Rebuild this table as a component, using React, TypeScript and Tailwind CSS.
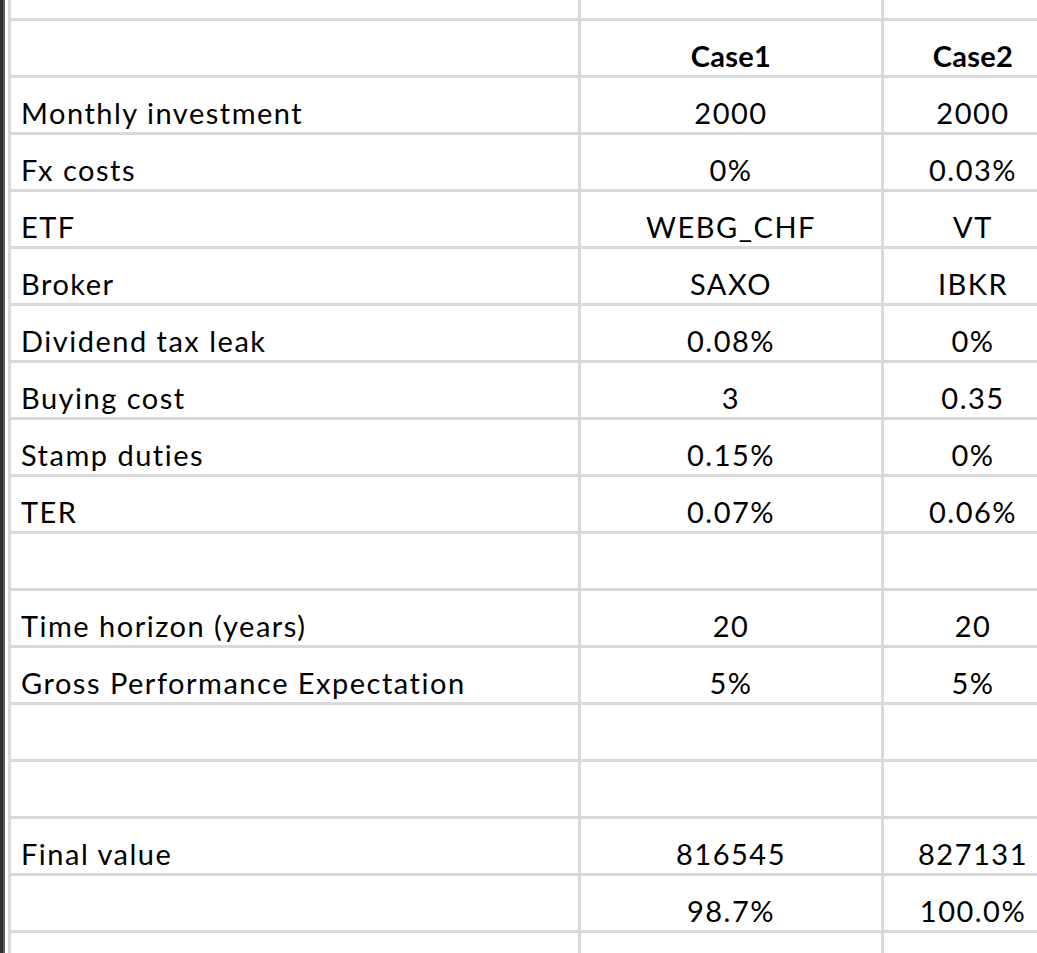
import React from "react";

type Row = { label: string; a: string; b: string; bold?: boolean };

const rows: Row[] = [
  { label: "", a: "Case1", b: "Case2", bold: true },
  { label: "Monthly investment", a: "2000", b: "2000" },
  { label: "Fx costs", a: "0%", b: "0.03%" },
  { label: "ETF", a: "WEBG_CHF", b: "VT" },
  { label: "Broker", a: "SAXO", b: "IBKR" },
  { label: "Dividend tax leak", a: "0.08%", b: "0%" },
  { label: "Buying cost", a: "3", b: "0.35" },
  { label: "Stamp duties", a: "0.15%", b: "0%" },
  { label: "TER", a: "0.07%", b: "0.06%" },
  { label: "", a: "", b: "" },
  { label: "Time horizon (years)", a: "20", b: "20" },
  { label: "Gross Performance Expectation", a: "5%", b: "5%" },
  { label: "", a: "", b: "" },
  { label: "", a: "", b: "" },
  { label: "Final value", a: "816545", b: "827131" },
  { label: "", a: "98.7%", b: "100.0%" },
];

export default function App() {
  return (
    <div
      className="flex w-[1037px] h-[953px] overflow-hidden bg-white text-black"
      style={{ fontFamily: "Lato, 'Open Sans', sans-serif" }}
    >
      <div className="w-[3px] shrink-0 bg-[#2f2f2f]" />
      <div className="w-[2px] shrink-0 bg-[#5e5e5e]" />
      <div className="w-[3px] shrink-0 bg-white" />
      <div className="grid shrink-0 grid-cols-[567px_300px_200px] grid-rows-[18px_repeat(16,54px)_40px] gap-[3px] border-l-[3px] border-[#d9d9d9] bg-[#d9d9d9] text-[29px] leading-none">
        <div className="bg-white" />
        <div className="bg-white" />
        <div className="bg-white" />
        {rows.map((r, i) => (
          <React.Fragment key={i}>
            <div className="flex items-end bg-white pl-[10px] pb-[5px] tracking-[1.5px]">
              {r.label}
            </div>
            <div
              className={`flex items-end justify-center bg-white pb-[5px] ${r.bold ? "font-bold tracking-[0.3px]" : "tracking-[1.5px]"}`}
            >
              {r.a}
            </div>
            <div
              className={`flex items-end justify-center bg-white pb-[5px] pr-[22px] ${r.bold ? "font-bold tracking-[0.3px]" : "tracking-[1.5px]"}`}
            >
              {r.b}
            </div>
          </React.Fragment>
        ))}
        <div className="bg-white" />
        <div className="bg-white" />
        <div className="bg-white" />
      </div>
    </div>
  );
}
